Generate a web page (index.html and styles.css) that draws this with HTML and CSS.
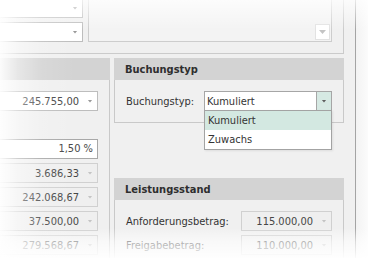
FILE: index.html
```html
<!DOCTYPE html>
<html lang="de">
<head>
<meta charset="utf-8">
<title>Buchungstyp</title>
<link rel="stylesheet" href="styles.css">
</head>
<body>
<div class="stage">
  <div class="window">
    <div class="inner">
      <div class="topgroup">
        <div class="ddcol">
          <div class="combo white"><span class="val"></span><span class="btn"><i class="tri"></i></span></div>
          <div class="combo white"><span class="val"></span><span class="btn"><i class="tri"></i></span></div>
        </div>
        <div class="memo"><span class="memobtn"><i class="tri light"></i></span></div>
      </div>
      <div class="panels">
        <div class="panel left">
          <div class="phead"></div>
          <div class="pbody rows">
            <div class="combo white"><span class="val">245.755,00</span><span class="btn"><i class="tri"></i></span></div>
            <div class="spacer"></div>
            <div class="textbox">1,50 %</div>
            <div class="combo ro"><span class="val">3.686,33</span><span class="btn"><i class="tri light"></i></span></div>
            <div class="combo ro"><span class="val">242.068,67</span><span class="btn"><i class="tri light"></i></span></div>
            <div class="combo ro"><span class="val">37.500,00</span><span class="btn"><i class="tri light"></i></span></div>
            <div class="combo ro"><span class="val">279.568,67</span><span class="btn"><i class="tri light"></i></span></div>
          </div>
        </div>
        <div class="rightcol">
          <div class="panel buch">
            <div class="phead"><span class="ptitle">Buchungstyp</span></div>
            <div class="pbody">
              <div class="field">
                <span class="label w78">Buchungstyp:</span>
                <div class="dropwrap">
                  <div class="combo active"><span class="val left">Kumuliert</span><span class="btn"><i class="tri dark"></i></span></div>
                  <ul class="popup">
                    <li class="sel">Kumuliert</li>
                    <li>Zuwachs</li>
                  </ul>
                </div>
              </div>
            </div>
          </div>
          <div class="panel leist">
            <div class="phead"><span class="ptitle">Leistungsstand</span></div>
            <div class="pbody rows">
              <div class="field">
                <span class="label w115">Anforderungsbetrag:</span>
                <div class="combo ro grow"><span class="val">115.000,00</span><span class="btn"><i class="tri light"></i></span></div>
              </div>
              <div class="field">
                <span class="label w115">Freigabebetrag:</span>
                <div class="combo ro grow"><span class="val">110.000,00</span><span class="btn"><i class="tri light"></i></span></div>
              </div>
            </div>
          </div>
        </div>
      </div>
    </div>
  </div>
  <div class="outside"></div>
  <div class="fade fade-left"></div>
  <div class="fade fade-top"></div>
  <div class="fade fade-bottom"></div>
</div>
</body>
</html>
```

FILE: styles.css
```css
* { box-sizing: border-box; }
html, body { margin: 0; padding: 0; }
body {
  width: 368px;
  height: 258px;
  overflow: hidden;
  background: #ffffff;
  font-family: "DejaVu Sans Condensed", "Liberation Sans", sans-serif;
  font-size: 11px;
  color: #333333;
}
.stage {
  position: relative;
  width: 368px;
  height: 258px;
  display: flex;
}
.window {
  width: 356px;
  height: 258px;
  flex: none;
  background: #f0f0f0;
  border-right: 1px solid #a4a4a4;
  overflow: hidden;
}
.outside {
  flex: 1;
  background: linear-gradient(to right, #f3f3f3, #fbfbfb);
}
.inner {
  width: 384px;
  margin-left: -40px;
  margin-top: -20px;
}
/* top group */
.topgroup {
  display: flex;
  gap: 5px;
  border: 1px solid #cbcbcb;
  padding: 17px 11px 11px 10px;
}
.ddcol {
  width: 112px;
  display: flex;
  flex-direction: column;
  gap: 4px;
}
.memo {
  flex: 1;
  background: #f3f3f3;
  border: 1px solid #cdcdcd;
  display: flex;
  justify-content: flex-end;
  align-items: flex-end;
  padding: 1px;
}
.memobtn {
  width: 15px;
  height: 16px;
  background: #ffffff;
  border: 1px solid #e2e2e2;
  display: flex;
  align-items: center;
  justify-content: center;
}
/* panels */
.panels {
  display: flex;
  gap: 4px;
  margin-top: 4px;
  align-items: flex-start;
}
.panel {
  border: 1px solid #c9c9c9;
  border-top: none;
}
.panel.left { width: 150px; height: 240px; }
.rightcol {
  width: 230px;
  display: flex;
  flex-direction: column;
}
.phead {
  height: 22px;
  background: #d3d3d3;
  margin: 0 -1px;
  padding: 0 11px;
  display: flex;
  align-items: center;
}
.ptitle {
  font-weight: bold;
  color: #2e2e2e;
  padding-top: 1px;
}
.pbody {
  padding: 11px;
}
.rows {
  display: flex;
  flex-direction: column;
  gap: 4px;
}
.panel.left .rows { align-items: flex-end; }
.panel.leist { margin-top: 55px; height: 90px; }
.spacer { height: 20px; }
.field {
  display: flex;
  align-items: center;
}
.label { flex: none; color: #333333; }
.w78 { width: 78px; }
.w115 { width: 115px; }
/* combos */
.combo {
  height: 20px;
  display: flex;
  align-items: center;
  border: 1px solid #bdbdbd;
  background: #ffffff;
  color: #474747;
}
.panel.left .combo, .panel.left .textbox { width: 110px; }
.combo.ro {
  background: #efefef;
  border-color: #d0d0d0;
}
.combo.grow { flex: 1; }
.val {
  flex: 1;
  text-align: right;
  padding-right: 4px;
  white-space: nowrap;
}
.val.left { text-align: left; padding-left: 2px; color: #333; }
.btn {
  width: 14px;
  height: 100%;
  display: flex;
  align-items: center;
  justify-content: center;
  flex: none;
}
.textbox {
  height: 20px;
  border: 1px solid #a8a8a8;
  background: #ffffff;
  color: #474747;
  text-align: right;
  padding-right: 4px;
  line-height: 18px;
}
.tri {
  display: block;
  width: 5px;
  height: 3px;
  background: #9a9a9a;
  clip-path: polygon(0 0, 100% 0, 50% 100%);
}
.tri.light { background: #c4c4c4; }
.tri.dark { background: #5e5e5e; }
.memobtn .tri { width: 7px; height: 4px; }
/* active combo + popup */
.dropwrap {
  flex: 1;
  position: relative;
}
.combo.active {
  border-color: #a6a6a6;
}
.combo.active .btn {
  width: 15px;
  background: #d6e9e3;
  border-left: 1px solid #a6a6a6;
}
.popup {
  position: absolute;
  top: 19px;
  left: 0;
  right: 0;
  margin: 0;
  padding: 0;
  list-style: none;
  background: #ffffff;
  border: 1px solid #a3a3a3;
  box-shadow: 1px 1px 2px rgba(0,0,0,0.08);
}
.popup li {
  height: 19px;
  line-height: 19px;
  padding-left: 3px;
  color: #333333;
}
.popup li.sel { background: #d3e8e1; }
/* fades */
.fade {
  position: absolute;
  pointer-events: none;
}
.fade-left {
  left: 0; top: 0; bottom: 0;
  width: 80px;
  background: linear-gradient(to right, rgba(255,255,255,0.92) 0px, rgba(255,255,255,0.45) 18px, rgba(255,255,255,0.12) 42px, rgba(255,255,255,0) 75px);
}
.fade-top {
  left: 0; right: 0; top: 0;
  height: 30px;
  background: linear-gradient(to bottom, rgba(255,255,255,0.75), rgba(255,255,255,0));
}
.fade-bottom {
  left: 0; right: 0; bottom: 0;
  height: 30px;
  background: linear-gradient(to bottom, rgba(255,255,255,0) 0px, rgba(255,255,255,0.6) 14px, rgba(255,255,255,0.95) 30px);
}
```
